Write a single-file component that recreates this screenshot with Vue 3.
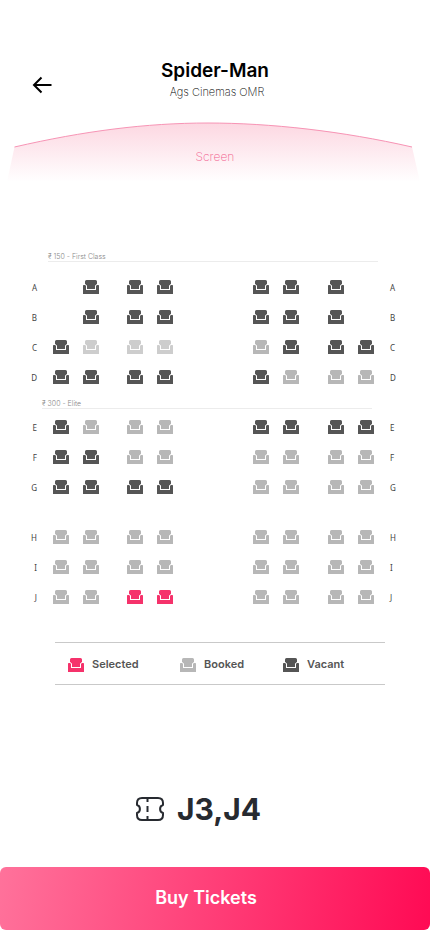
<script setup>
import { computed, reactive } from 'vue'

// v = vacant, b = booked, h = held (lighter grey), s = selected, - = no seat
const sections = reactive([
  {
    id: 'first',
    title: '₹ 150 - First Class',
    rows: [
      { name: 'A', seats: [...'-vvvvvv-'] },
      { name: 'B', seats: [...'-vvvvvv-'] },
      { name: 'C', seats: [...'vhhhbvvv'] },
      { name: 'D', seats: [...'vvvvvbbb'] },
    ],
  },
  {
    id: 'elite',
    title: '₹ 300 - Elite',
    rows: [
      { name: 'E', seats: [...'vbbbvvvv'] },
      { name: 'F', seats: [...'vvbbbbbb'] },
      { name: 'G', seats: [...'vvvvbbbb'] },
    ],
  },
  {
    id: 'rear',
    title: '',
    rows: [
      { name: 'H', seats: [...'bbbbbbbb'] },
      { name: 'I', seats: [...'bbbbbbbb'] },
      { name: 'J', seats: [...'bbssbbbb'] },
    ],
  },
])

const stateClass = { v: 'vacant', b: 'booked', h: 'held', s: 'selected', '-': 'empty' }

const legend = [
  { state: 'selected', label: 'Selected' },
  { state: 'booked', label: 'Booked' },
  { state: 'vacant', label: 'Vacant' },
]

const chosen = computed(() =>
  sections
    .flatMap((s) => s.rows)
    .flatMap((r) => r.seats.map((seat, i) => (seat === 's' ? r.name + (i + 1) : null)))
    .filter(Boolean)
    .join(',')
)

function toggle(row, i) {
  if (row.seats[i] === 'v') row.seats[i] = 's'
  else if (row.seats[i] === 's') row.seats[i] = 'v'
}
</script>

<template>
  <main class="page">
    <svg class="defs" aria-hidden="true">
      <symbol id="seat" viewBox="0 0 16 14">
        <path d="M3.500 0h9A1.500 1.500 0 0 1 14 1.500V4.500L12.500 6V9H3.500V6L2 4.500V1.500A1.500 1.500 0 0 1 3.500 0z" />
        <path d="M0 5.700Q0 5 .7 5H2.300Q3 5 3 5.700V10H13V5.700Q13 5 13.700 5H15.300Q16 5 16 5.700V14H0z" />
        <path d="M2 4.500 3.500 5.500V9.500H12.500V5.500L14 4.500" fill="none" stroke="#fff" />
      </symbol>
    </svg>

    <header class="header">
      <button class="back" type="button" aria-label="Back">
        <svg viewBox="0 0 20 18" width="20" height="18">
          <path d="M9.500 1.500 2 9 9.500 16.500M2 9H19.500" fill="none" stroke="currentColor" stroke-width="2" />
        </svg>
      </button>
      <div class="heading">
        <h1>Spider-Man</h1>
        <p>Ags Cinemas OMR</p>
      </div>
    </header>

    <div class="screen">
      <svg viewBox="0 0 430 62" aria-hidden="true">
        <defs>
          <linearGradient id="glow" x1="0" y1="0" x2="0" y2="1">
            <stop offset="0" stop-color="#f22e63" stop-opacity="0.19" />
            <stop offset="1" stop-color="#f22e63" stop-opacity="0" />
          </linearGradient>
        </defs>
        <path d="M14.500 27C84 11 146 3 208 3S342 11 412 27L420 62H7z" fill="url(#glow)" />
        <path d="M14.500 27C84 11 146 3 208 3S342 11 412 27" fill="none" stroke="#f794b5" />
      </svg>
      <span>Screen</span>
    </div>

    <div class="map">
      <section v-for="section in sections" :key="section.id" :class="['block', section.id]">
        <h2 v-if="section.title">{{ section.title }}</h2>
        <div v-for="row in section.rows" :key="row.name" class="row">
          <span class="name left">{{ row.name }}</span>
          <div v-for="pair in 4" :key="pair" class="pair">
            <button
              v-for="n in [pair * 2 - 2, pair * 2 - 1]"
              :key="n"
              type="button"
              :class="['seat', stateClass[row.seats[n]]]"
              :disabled="!'vs'.includes(row.seats[n])"
              :aria-label="row.name + (n + 1)"
              @click="toggle(row, n)"
            >
              <svg><use href="#seat" /></svg>
            </button>
          </div>
          <span class="name right">{{ row.name }}</span>
        </div>
      </section>
    </div>

    <ul class="legend">
      <li v-for="item in legend" :key="item.state" :class="item.state">
        <svg><use href="#seat" /></svg>
        <span>{{ item.label }}</span>
      </li>
    </ul>

    <div class="summary">
      <svg viewBox="0 0 28 24" width="28" height="24" fill="none" stroke="currentColor" stroke-width="2" aria-hidden="true">
        <path d="M6 1H22Q27 1 27 6V8A4.200 4.200 0 0 0 27 16V18Q27 23 22 23H6Q1 23 1 18V16A4.200 4.200 0 0 0 1 8V6Q1 1 6 1z" stroke-linejoin="round" />
        <path d="M11.500 1V5M11.500 9V15M11.500 19V23" />
      </svg>
      <output>{{ chosen }}</output>
    </div>

    <button class="buy" type="button">Buy Tickets</button>
  </main>
</template>

<style>
body {
  margin: 0;
  background: #fff;
}
</style>

<style scoped>
.page {
  display: flex;
  flex-direction: column;
  min-height: 100vh;
  box-sizing: border-box;
  padding: 56px 0 2px;
  background: #fff;
  font-family: Inter, 'Liberation Sans', sans-serif;
  color: #000;
}
.defs {
  display: block;
  width: 0;
  height: 0;
}
button {
  padding: 0;
  border: 0;
  background: none;
  font-family: inherit;
  cursor: pointer;
}
.header {
  display: grid;
  grid-template-columns: 20px 1fr 20px;
  padding: 0 32px;
}
.back {
  align-self: end;
  height: 18px;
  margin-bottom: 4px;
  color: #000;
}
.back svg {
  display: block;
}
.heading {
  text-align: center;
}
h1 {
  margin: 0;
  font-size: 19px;
  line-height: 30px;
  font-weight: 600;
}
.heading p {
  margin: 0;
  padding-left: 4px;
  font-size: 11px;
  line-height: 12px;
  font-weight: 200;
  color: #000;
}
.screen {
  display: grid;
  margin-top: 22px;
}
.screen > * {
  grid-area: 1 / 1;
}
.screen svg {
  display: block;
  width: 100%;
}
.screen span {
  place-self: center;
  padding-top: 12px;
  font-size: 12px;
  line-height: 16px;
  font-weight: 200;
  color: #f2608e;
}
.map {
  margin-top: 71px;
}
h2 {
  margin: 0 58px 16px 42px;
  border-bottom: 1px solid #ececec;
  font-size: 7px;
  line-height: 8px;
  font-weight: 300;
  color: #888;
}
.first h2 {
  margin: 0 52px 14px 48px;
}
.elite h2 {
  margin-top: 12px;
  margin-bottom: 7px;
}
.rear {
  margin-top: 28px;
}
.row {
  display: grid;
  grid-template-columns: 23px 46px 28fr 46px 80fr 46px 29fr 46px 23px;
  align-items: center;
  height: 22px;
  padding: 0 33px 0 30px;
}
.row + .row {
  margin-top: 8px;
}
.pair {
  display: flex;
  justify-content: space-between;
}
.pair:nth-of-type(2) {
  grid-column: 4;
}
.pair:nth-of-type(3) {
  grid-column: 6;
}
.pair:nth-of-type(4) {
  grid-column: 8;
}
.name {
  padding-top: 2px;
  font-family: 'Noto Sans', 'Open Sans', sans-serif;
  font-size: 8px;
  line-height: 12px;
  color: #444;
}
.left {
  padding-right: 16px;
  text-align: right;
}
.right {
  padding-left: 16px;
}
.seat,
.seat svg,
.legend svg {
  display: block;
  width: 16px;
  height: 14px;
  fill: currentColor;
}
.seat:disabled {
  cursor: default;
}
.vacant {
  color: #555;
}
.booked {
  color: #b7b7b7;
}
.held {
  color: #cdcdcd;
}
.selected {
  color: #f5326b;
}
.empty {
  visibility: hidden;
}
.legend {
  display: grid;
  grid-template-columns: 112fr 103fr 102fr;
  margin: 34px 45px 0 55px;
  padding: 13px 0 11px 13px;
  border: solid #c9c9c9;
  border-width: 1px 0;
  list-style: none;
}
.legend li {
  display: flex;
  align-items: center;
  gap: 8px;
}
.legend span {
  font-size: 11px;
  line-height: 17px;
  font-weight: 600;
  color: #555;
}
.summary {
  display: flex;
  align-items: center;
  justify-content: center;
  gap: 13px;
  margin-top: auto;
  padding: 0 33px 38px 0;
  color: #272a30;
}
.summary output {
  font-size: 30px;
  line-height: 40px;
  font-weight: 700;
}
.buy {
  height: 63px;
  padding: 0 18px 2px 0;
  border-radius: 6px;
  background: linear-gradient(100deg, #ff729b, #ff0a54);
  font-size: 18px;
  font-weight: 600;
  color: #fff;
}
</style>
